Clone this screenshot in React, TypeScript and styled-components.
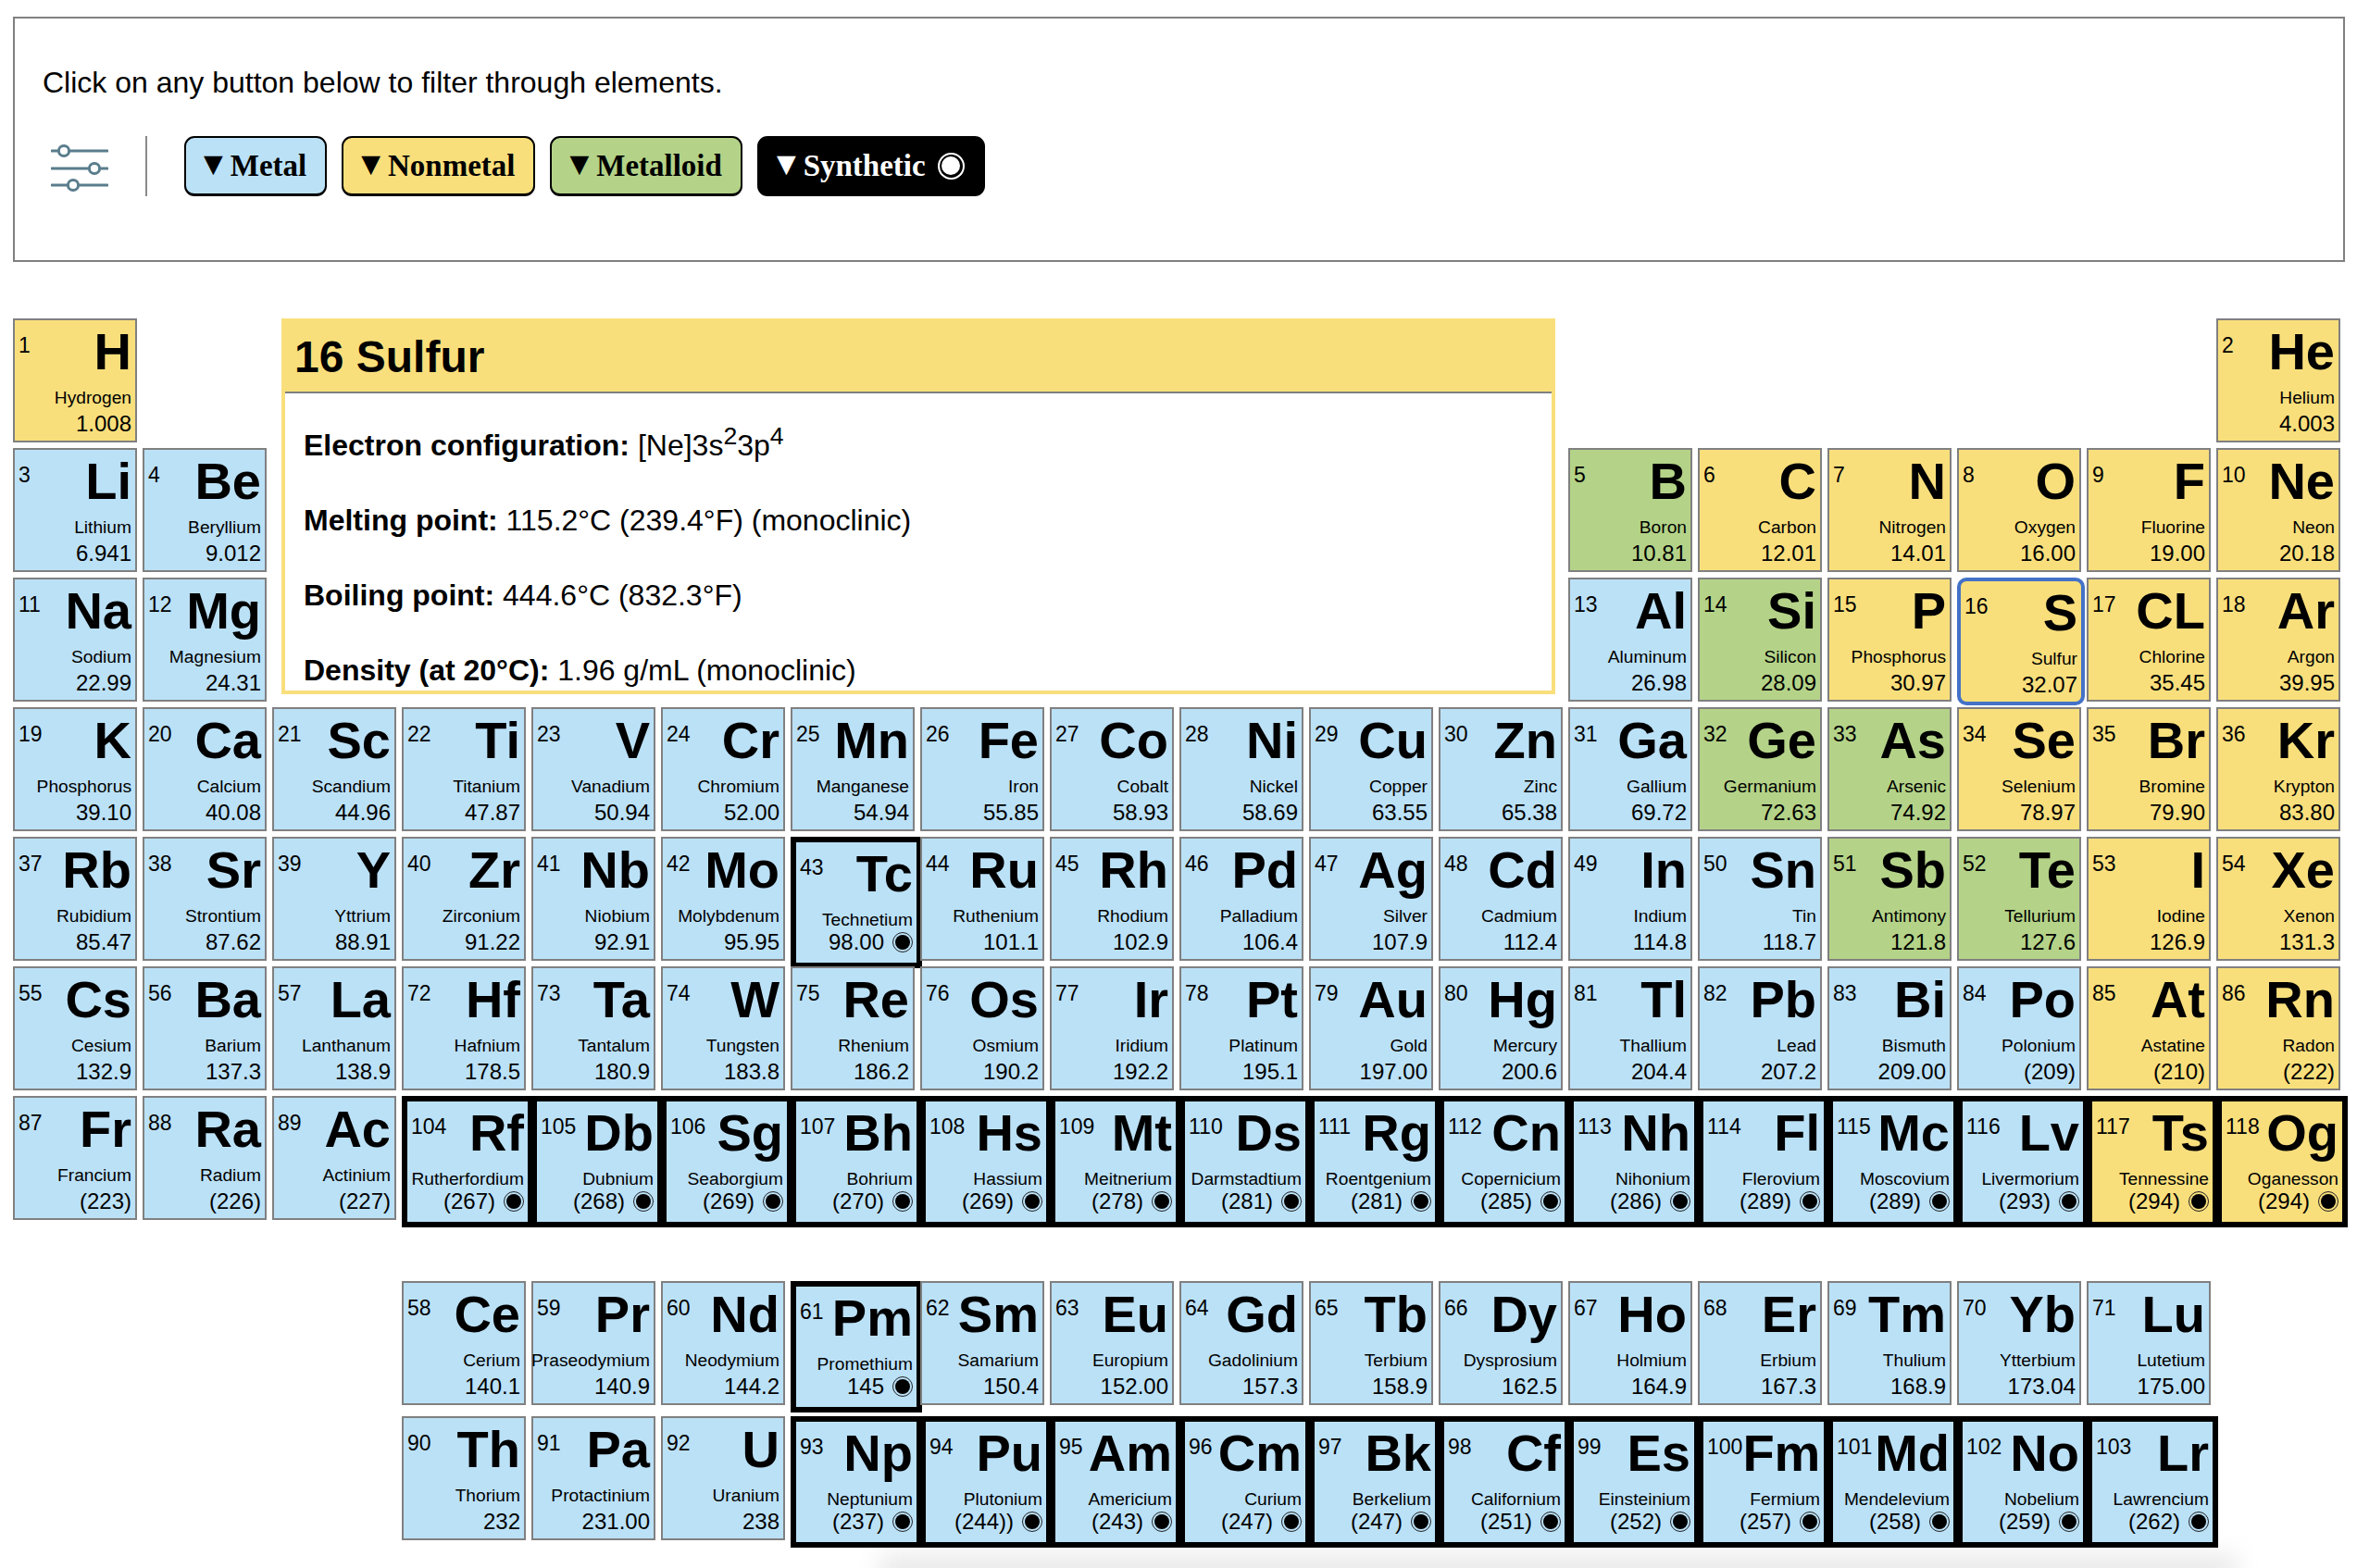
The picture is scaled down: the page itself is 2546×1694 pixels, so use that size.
import React from 'react';
import styled, { createGlobalStyle } from 'styled-components';

type Kind = 'metal' | 'nonmetal' | 'metalloid';
type Mark = 'plain' | 'synthetic' | 'selected';

const colors: Record<Kind, string> = {
  metal: '#bbe1f7',
  nonmetal: '#f9df7c',
  metalloid: '#b4d388',
};

const sizes: Record<Mark, number> = { plain: 134, synthetic: 142, selected: 138 };
const borders: Record<Mark, string> = {
  plain: '2px solid #808080',
  synthetic: '6px solid #000',
  selected: '4px solid #4472c8',
};

const GlobalStyle = createGlobalStyle`
  html, body {
    margin: 0;
    padding: 0;
    background: #fff;
    color: #000;
    font-family: "Liberation Sans", Arial, sans-serif;
    overflow: hidden;
  }
`;

const Page = styled.div`
  position: relative;
  isolation: isolate;
  width: 2546px;
  height: 1694px;
  padding: 18px 0 0 14px;
  box-sizing: border-box;
  overflow: hidden;
`;

const FilterPanel = styled.section`
  box-sizing: border-box;
  width: 2519px;
  height: 265px;
  margin-bottom: 61px;
  padding: 51px 30px 0;
  border: 2px solid #808080;
`;

const Prompt = styled.p`
  margin: 0 0 40px;
  font-size: 32px;
  line-height: 36px;
`;

const FilterRow = styled.div`
  display: flex;
  align-items: center;
  height: 65px;
`;

const SlidersIcon = styled.svg`
  width: 62px;
  height: 65px;
  margin-left: 9px;
  flex: none;
`;

const Divider = styled.div`
  width: 2px;
  height: 65px;
  margin: 0 40px 0 40px;
  background: #8a8a8a;
`;

const FilterButtons = styled.div`
  display: flex;
  gap: 16px;
`;

const FilterButton = styled.button<{ $bg: string; $fg: string }>`
  display: flex;
  align-items: center;
  box-sizing: border-box;
  height: 65px;
  padding: 0 20px 0 19px;
  border: 2px solid #000;
  border-bottom-width: 3px;
  border-radius: 11px;
  background: ${(p) => p.$bg};
  color: ${(p) => p.$fg};
  font-family: "Liberation Serif", "Times New Roman", serif;
  font-size: 33px;
  font-weight: bold;
  white-space: nowrap;
`;

const Caret = styled.span`
  font-family: "DejaVu Sans", sans-serif;
  font-size: 27px;
  font-weight: normal;
  line-height: 1;
  margin-right: 8px;
  position: relative;
  top: -3px;
`;

const BigFisheye = styled.span`
  display: flex;
  align-items: center;
  justify-content: center;
  box-sizing: border-box;
  width: 29px;
  height: 29px;
  margin-left: 13px;
  border: 2px solid #fff;
  border-radius: 50%;

  &::after {
    content: '';
    width: 20px;
    height: 20px;
    border-radius: 50%;
    background: #fff;
  }
`;

const TableGrid = styled.div`
  display: grid;
  grid-template-columns: repeat(18, 134px);
  grid-auto-rows: 134px;
  column-gap: 6px;
  row-gap: 6px;
`;

const LowerGrid = styled(TableGrid)`
  margin-top: 66px;
  row-gap: 12px;
`;

const Cell = styled.div<{ $kind: Kind; $mark: Mark; $col: number; $row: number }>`
  grid-column: ${(p) => p.$col};
  grid-row: ${(p) => p.$row};
  align-self: start;
  justify-self: start;
  display: flex;
  flex-direction: column;
  box-sizing: border-box;
  width: ${(p) => sizes[p.$mark]}px;
  height: ${(p) => sizes[p.$mark]}px;
  padding: 6px 4px 6px;
  border: ${(p) => borders[p.$mark]};
  border-radius: ${(p) => (p.$mark === 'selected' ? '10px' : '0')};
  background: ${(p) => colors[p.$kind]};
`;

const CellTop = styled.div`
  display: flex;
  justify-content: space-between;
  align-items: flex-start;
  white-space: nowrap;
`;

const Number = styled.span`
  margin-top: 10px;
  font-size: 23px;
  line-height: 22px;
`;

const Symbol = styled.span`
  font-size: 56px;
  font-weight: bold;
  line-height: 56px;
`;

const Name = styled.div`
  display: flex;
  justify-content: flex-end;
  margin-top: auto;
  font-size: 19.2px;
  line-height: 24px;
  white-space: nowrap;
`;

const Mass = styled.div<{ $raised: boolean }>`
  display: flex;
  justify-content: flex-end;
  align-items: center;
  gap: 9px;
  margin-top: ${(p) => (p.$raised ? '0' : '4px')};
  margin-bottom: ${(p) => (p.$raised ? '4px' : '0')};
  font-size: 24px;
  line-height: 24px;
  white-space: nowrap;
`;

const Fisheye = styled.span`
  display: flex;
  align-items: center;
  justify-content: center;
  box-sizing: border-box;
  width: 22px;
  height: 22px;
  border: 1px solid #222;
  border-radius: 50%;
  flex: none;

  &::after {
    content: '';
    width: 16px;
    height: 16px;
    border-radius: 50%;
    background: #000;
  }
`;

const DetailPanel = styled.article`
  grid-column: 3 / 13;
  grid-row: 1 / 4;
  box-sizing: border-box;
  height: 406px;
  margin: 0 8px 0 10px;
  border: 4px solid #f9df7c;
  overflow: hidden;
  background: #fff;
`;

const DetailTitle = styled.h2`
  margin: 0;
  height: 75px;
  padding-left: 10px;
  border-bottom: 2px solid #808080;
  background: #f9df7c;
  font-size: 48px;
  font-weight: bold;
  line-height: 75px;
`;

const DetailBody = styled.div`
  display: flex;
  flex-direction: column;
  gap: 45px;
  padding: 38px 0 0 20px;
`;

const DetailRow = styled.div`
  font-size: 32px;
  line-height: 36px;
  white-space: nowrap;

  sup {
    line-height: 0;
  }
`;

const BottomShade = styled.div`
  position: absolute;
  left: 950px;
  right: 130px;
  bottom: -16px;
  height: 30px;
  background: #e8e8e8;
  filter: blur(13px);
  z-index: -1;
`;

const NONMETALS = new Set([1, 2, 6, 7, 8, 9, 10, 15, 16, 17, 18, 34, 35, 36, 53, 54, 85, 86, 117, 118]);
const METALLOIDS = new Set([5, 14, 32, 33, 51, 52]);
const SYNTHETIC = new Set([43, 61, 93, 94, 95, 96, 97, 98, 99, 100, 101, 102, 103, 104, 105, 106, 107, 108, 109, 110, 111, 112, 113, 114, 115, 116, 117, 118]);

// row, first column, then number|symbol|name|mass for each element in that run
const upperRuns: [number, number, string[]][] = [
  [1, 1, ['1|H|Hydrogen|1.008']],
  [1, 18, ['2|He|Helium|4.003']],
  [2, 1, ['3|Li|Lithium|6.941', '4|Be|Beryllium|9.012']],
  [2, 13, ['5|B|Boron|10.81', '6|C|Carbon|12.01', '7|N|Nitrogen|14.01', '8|O|Oxygen|16.00', '9|F|Fluorine|19.00', '10|Ne|Neon|20.18']],
  [3, 1, ['11|Na|Sodium|22.99', '12|Mg|Magnesium|24.31']],
  [3, 13, ['13|Al|Aluminum|26.98', '14|Si|Silicon|28.09', '15|P|Phosphorus|30.97', '16|S|Sulfur|32.07', '17|CL|Chlorine|35.45', '18|Ar|Argon|39.95']],
  [4, 1, ['19|K|Phosphorus|39.10', '20|Ca|Calcium|40.08', '21|Sc|Scandium|44.96', '22|Ti|Titanium|47.87', '23|V|Vanadium|50.94', '24|Cr|Chromium|52.00', '25|Mn|Manganese|54.94', '26|Fe|Iron|55.85', '27|Co|Cobalt|58.93', '28|Ni|Nickel|58.69', '29|Cu|Copper|63.55', '30|Zn|Zinc|65.38', '31|Ga|Gallium|69.72', '32|Ge|Germanium|72.63', '33|As|Arsenic|74.92', '34|Se|Selenium|78.97', '35|Br|Bromine|79.90', '36|Kr|Krypton|83.80']],
  [5, 1, ['37|Rb|Rubidium|85.47', '38|Sr|Strontium|87.62', '39|Y|Yttrium|88.91', '40|Zr|Zirconium|91.22', '41|Nb|Niobium|92.91', '42|Mo|Molybdenum|95.95', '43|Tc|Technetium|98.00', '44|Ru|Ruthenium|101.1', '45|Rh|Rhodium|102.9', '46|Pd|Palladium|106.4', '47|Ag|Silver|107.9', '48|Cd|Cadmium|112.4', '49|In|Indium|114.8', '50|Sn|Tin|118.7', '51|Sb|Antimony|121.8', '52|Te|Tellurium|127.6', '53|I|Iodine|126.9', '54|Xe|Xenon|131.3']],
  [6, 1, ['55|Cs|Cesium|132.9', '56|Ba|Barium|137.3', '57|La|Lanthanum|138.9', '72|Hf|Hafnium|178.5', '73|Ta|Tantalum|180.9', '74|W|Tungsten|183.8', '75|Re|Rhenium|186.2', '76|Os|Osmium|190.2', '77|Ir|Iridium|192.2', '78|Pt|Platinum|195.1', '79|Au|Gold|197.00', '80|Hg|Mercury|200.6', '81|Tl|Thallium|204.4', '82|Pb|Lead|207.2', '83|Bi|Bismuth|209.00', '84|Po|Polonium|(209)', '85|At|Astatine|(210)', '86|Rn|Radon|(222)']],
  [7, 1, ['87|Fr|Francium|(223)', '88|Ra|Radium|(226)', '89|Ac|Actinium|(227)', '104|Rf|Rutherfordium|(267)', '105|Db|Dubnium|(268)', '106|Sg|Seaborgium|(269)', '107|Bh|Bohrium|(270)', '108|Hs|Hassium|(269)', '109|Mt|Meitnerium|(278)', '110|Ds|Darmstadtium|(281)', '111|Rg|Roentgenium|(281)', '112|Cn|Copernicium|(285)', '113|Nh|Nihonium|(286)', '114|Fl|Flerovium|(289)', '115|Mc|Moscovium|(289)', '116|Lv|Livermorium|(293)', '117|Ts|Tennessine|(294)', '118|Og|Oganesson|(294)']],
];

const lowerRuns: [number, number, string[]][] = [
  [1, 4, ['58|Ce|Cerium|140.1', '59|Pr|Praseodymium|140.9', '60|Nd|Neodymium|144.2', '61|Pm|Promethium|145', '62|Sm|Samarium|150.4', '63|Eu|Europium|152.00', '64|Gd|Gadolinium|157.3', '65|Tb|Terbium|158.9', '66|Dy|Dysprosium|162.5', '67|Ho|Holmium|164.9', '68|Er|Erbium|167.3', '69|Tm|Thulium|168.9', '70|Yb|Ytterbium|173.04', '71|Lu|Lutetium|175.00']],
  [2, 4, ['90|Th|Thorium|232', '91|Pa|Protactinium|231.00', '92|U|Uranium|238', '93|Np|Neptunium|(237)', '94|Pu|Plutonium|(244))', '95|Am|Americium|(243)', '96|Cm|Curium|(247)', '97|Bk|Berkelium|(247)', '98|Cf|Californium|(251)', '99|Es|Einsteinium|(252)', '100|Fm|Fermium|(257)', '101|Md|Mendelevium|(258)', '102|No|Nobelium|(259)', '103|Lr|Lawrencium|(262)']],
];

const ElementCell: React.FC<{ entry: string; row: number; col: number }> = ({ entry, row, col }) => {
  const [num, symbol, name, mass] = entry.split('|');
  const n = parseInt(num, 10);
  const kind: Kind = NONMETALS.has(n) ? 'nonmetal' : METALLOIDS.has(n) ? 'metalloid' : 'metal';
  const mark: Mark = n === 16 ? 'selected' : SYNTHETIC.has(n) ? 'synthetic' : 'plain';

  return (
    <Cell $kind={kind} $mark={mark} $row={row} $col={col}>
      <CellTop>
        <Number>{num}</Number>
        <Symbol>{symbol}</Symbol>
      </CellTop>
      <Name>{name}</Name>
      <Mass $raised={mark === 'synthetic'}>
        {mass}
        {mark === 'synthetic' && <Fisheye />}
      </Mass>
    </Cell>
  );
};

const renderRuns = (runs: [number, number, string[]][]) =>
  runs.flatMap(([row, col, items]) =>
    items.map((entry, i) => <ElementCell key={entry} entry={entry} row={row} col={col + i} />),
  );

const App: React.FC = () => {
  return (
    <Page>
      <GlobalStyle />
      <FilterPanel>
        <Prompt>Click on any button below to filter through elements.</Prompt>
        <FilterRow>
          <SlidersIcon viewBox="0 0 62 65" fill="none" stroke="#5a7d8c" strokeWidth="3.2" strokeLinecap="round">
            <path d="M1 16H61M1 35H61M1 53H61" />
            <circle cx="14" cy="16" r="5.6" fill="#fff" strokeWidth="3" />
            <circle cx="47" cy="35" r="5.6" fill="#fff" strokeWidth="3" />
            <circle cx="24" cy="53" r="5.6" fill="#fff" strokeWidth="3" />
          </SlidersIcon>
          <Divider />
          <FilterButtons>
            <FilterButton $bg={colors.metal} $fg="#000">
              <Caret>▼</Caret>Metal
            </FilterButton>
            <FilterButton $bg={colors.nonmetal} $fg="#000">
              <Caret>▼</Caret>Nonmetal
            </FilterButton>
            <FilterButton $bg={colors.metalloid} $fg="#000">
              <Caret>▼</Caret>Metalloid
            </FilterButton>
            <FilterButton $bg="#000" $fg="#fff">
              <Caret>▼</Caret>Synthetic
              <BigFisheye />
            </FilterButton>
          </FilterButtons>
        </FilterRow>
      </FilterPanel>

      <TableGrid>
        {renderRuns(upperRuns.slice(0, 2))}
        <DetailPanel>
          <DetailTitle>16 Sulfur</DetailTitle>
          <DetailBody>
            <DetailRow>
              <strong>Electron configuration:</strong> [Ne]3s<sup>2</sup>3p<sup>4</sup>
            </DetailRow>
            <DetailRow>
              <strong>Melting point:</strong> 115.2°C (239.4°F) (monoclinic)
            </DetailRow>
            <DetailRow>
              <strong>Boiling point:</strong> 444.6°C (832.3°F)
            </DetailRow>
            <DetailRow>
              <strong>Density (at 20°C):</strong> 1.96 g/mL (monoclinic)
            </DetailRow>
          </DetailBody>
        </DetailPanel>
        {renderRuns(upperRuns.slice(2))}
      </TableGrid>

      <LowerGrid>{renderRuns(lowerRuns)}</LowerGrid>
      <BottomShade />
    </Page>
  );
};

export default App;
